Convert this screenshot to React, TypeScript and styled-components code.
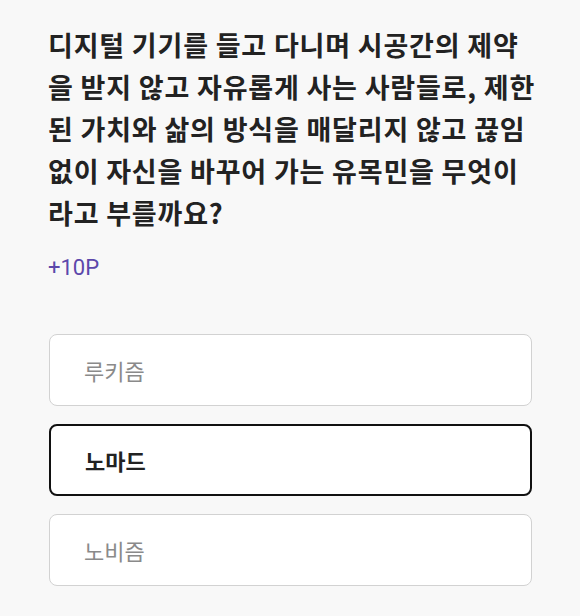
import React, { useState } from 'react';
import styled, { createGlobalStyle } from 'styled-components';

const GlobalStyle = createGlobalStyle`
  html, body {
    margin: 0;
    padding: 0;
    background: #f8f8f8;
  }
  * {
    box-sizing: border-box;
  }
`;

const questionLines = [
  '디지털 기기를 들고 다니며 시공간의 제약',
  '을 받지 않고 자유롭게 사는 사람들로, 제한',
  '된 가치와 삶의 방식을 매달리지 않고 끊임',
  '없이 자신을 바꾸어 가는 유목민을 무엇이',
  '라고 부를까요?',
];

const options = ['루키즘', '노마드', '노비즘'];

function App() {
  const [selected, setSelected] = useState(1);
  return (
    <>
      <GlobalStyle />
      <Page>
        <Question>
          {questionLines.map((line) => (
            <Line key={line}>{line}</Line>
          ))}
        </Question>
        <Point>+10P</Point>
        <OptionList>
          {options.map((text, i) => (
            <Option key={text} $active={i === selected} onClick={() => setSelected(i)}>
              {text}
            </Option>
          ))}
        </OptionList>
      </Page>
    </>
  );
}

export default App;

const Page = styled.main`
  display: flex;
  flex-direction: column;
  width: 580px;
  min-height: 616px;
  padding: 24px 48px 0 48px;
  background: #f8f8f8;
`;

const Question = styled.h1`
  margin: 0;
  font-family: 'Noto Sans CJK KR', 'Noto Sans', sans-serif;
  font-size: 27px;
  font-weight: 700;
  line-height: 42px;
  letter-spacing: 0.8px;
  color: #222222;
`;

const Line = styled.span`
  display: block;
  white-space: nowrap;
`;

const Point = styled.p`
  margin: 22px 0 0 0;
  font-family: Roboto, 'Noto Sans CJK KR', sans-serif;
  font-size: 22px;
  line-height: 24px;
  color: #5c48ab;
`;

const OptionList = styled.ul`
  display: flex;
  flex-direction: column;
  gap: 18px;
  margin: 54px 0 0 1px;
  padding: 0;
  list-style: none;
  width: 483px;
`;

const Option = styled.li<{ $active: boolean }>`
  display: flex;
  align-items: center;
  height: 72px;
  padding: 0 34px;
  border: ${(p) => (p.$active ? '2px solid #111111' : '1.5px solid #d2d2d2')};
  border-radius: 8px;
  background: #ffffff;
  font-family: 'Noto Sans CJK KR', 'Noto Sans', sans-serif;
  font-size: 22px;
  font-weight: ${(p) => (p.$active ? 700 : 400)};
  color: ${(p) => (p.$active ? '#222222' : '#8a8a8a')};
  cursor: pointer;
`;
